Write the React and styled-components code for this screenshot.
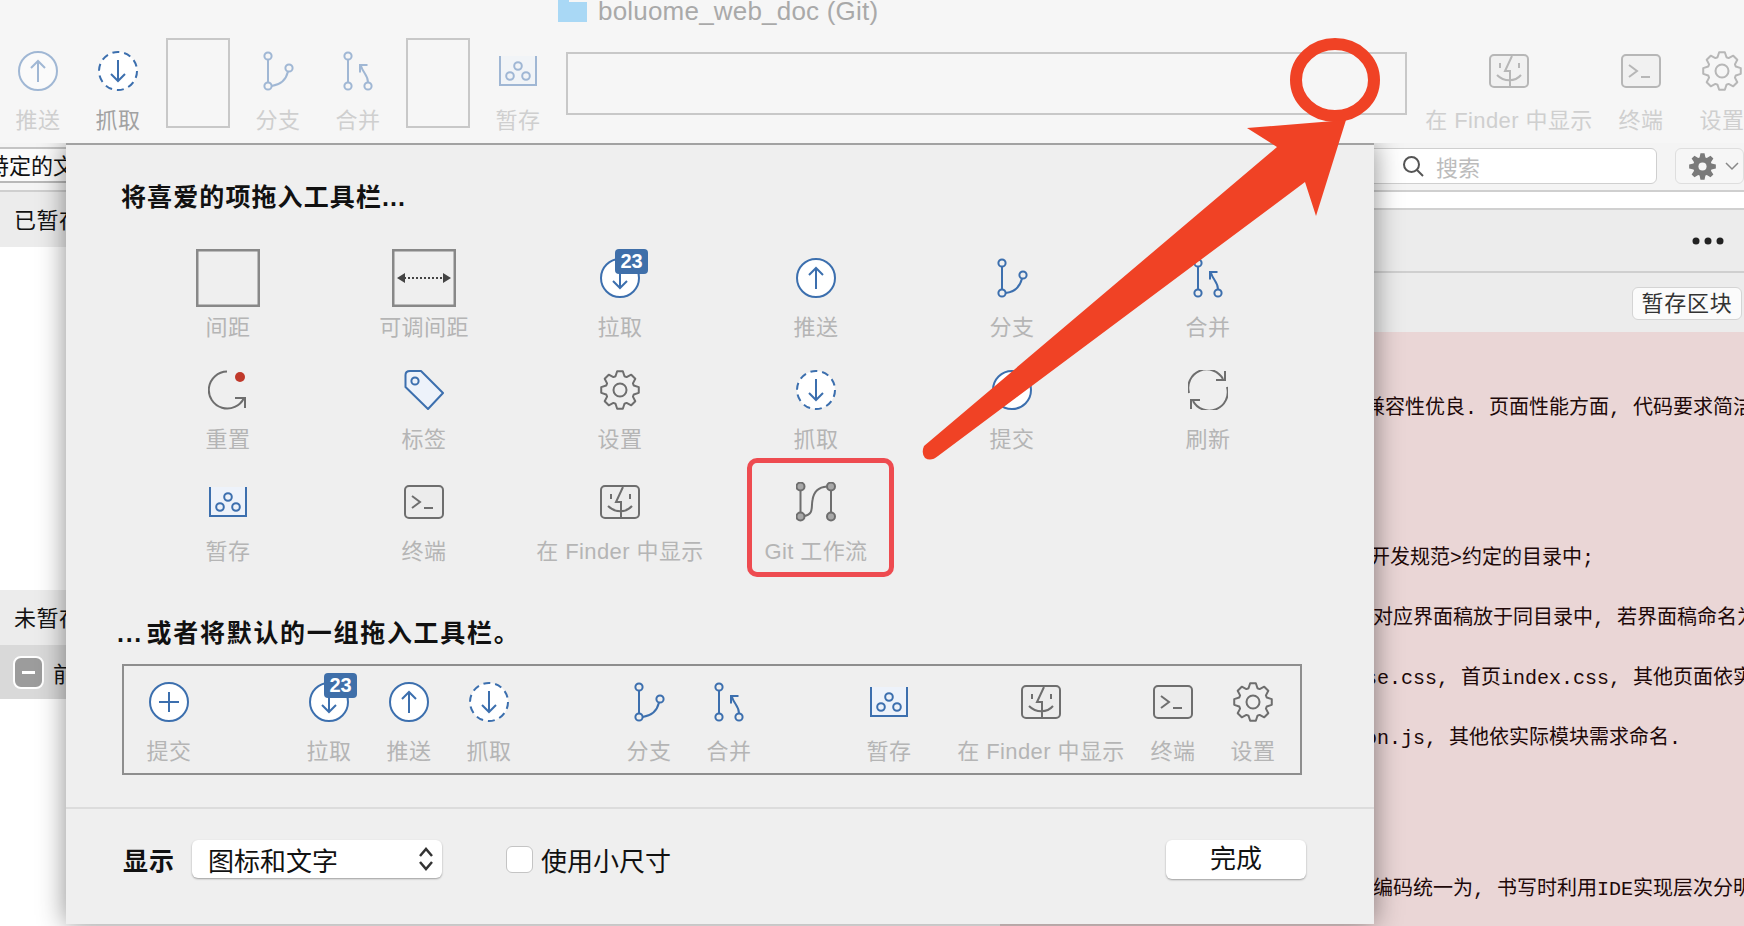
import React from "react";
import styled, { createGlobalStyle } from "styled-components";

const BLUE = "#3c6fae";
const GREY = "#6e6e6e";

const Global = createGlobalStyle`
  html, body {
    margin: 0;
    overflow: hidden;
    background: #fff;
  }
  * { box-sizing: border-box; }
`;

const Frame = styled.div`
  position: relative;
  width: 1744px;
  height: 926px;
  overflow: hidden;
  display: flex;
  flex-direction: column;
  font-family: "Liberation Sans", "Noto Sans CJK SC", sans-serif;
  color: #111;
`;

/* ---------- toolbar ---------- */
const Toolbar = styled.header`
  position: relative;
  z-index: 2;
  height: 143px;
  flex: none;
  background: #f6f6f6;
  overflow: hidden;
`;
const TitleRow = styled.div`
  height: 40px;
  display: flex;
  padding-left: 558px;
  gap: 11px;
  font-size: 26px;
  letter-spacing: 0.2px;
  line-height: 22px;
  color: #a9a9a9;
`;
const ToolRow = styled.div`
  display: flex;
  align-items: flex-start;
`;
const Slot = styled.div`
  position: relative;
  height: 62px;
  display: flex;
  align-items: center;
  justify-content: center;
  opacity: ${(p) => (p.$dim ? 0.46 : 1)};
`;
const Label = styled.div`
  margin-top: 5px;
  height: 28px;
  font-size: 22px;
  letter-spacing: 0.4px;
  line-height: 28px;
  text-align: center;
  white-space: nowrap;
  color: ${(p) => p.$color || "#b5b5b5"};
`;
const Tool = styled.div`
  flex: none;
  width: ${(p) => p.$w || 80}px;
  margin-left: ${(p) => p.$ml || 0}px;
`;
const Spacer = styled.div`
  flex: none;
  width: ${(p) => p.$w}px;
  height: ${(p) => p.$h || 90}px;
  margin-left: 8px;
  margin-right: 8px;
  margin-top: ${(p) => p.$mt || -2}px;
  border: 2px solid #c8c8c8;
`;

/* ---------- window behind the sheet ---------- */
const FilterBar = styled.div`
  height: 49px;
  flex: none;
  display: flex;
  align-items: center;
  justify-content: space-between;
  background: #f4f4f4;
  border-bottom: 2px solid #cfcfcf;
`;
const FilterInput = styled.div`
  width: 300px;
  height: 36px;
  margin-top: -3px;
  font-size: 22px;
  line-height: 36px;
  text-indent: -13px;
  background: #fbfbfb;
  border-top: 2px solid #c4c4c4;
  border-bottom: 2px solid #b8b8b8;
`;
const SearchGroup = styled.div`
  display: flex;
  align-items: center;
  gap: 18px;
  margin-top: -1px;
`;
const SearchBox = styled.div`
  width: 360px;
  height: 36px;
  display: flex;
  align-items: center;
  justify-content: flex-end;
  padding-right: 176px;
  gap: 11px;
  background: #fff;
  border: 1px solid #cfcfcf;
  border-radius: 6px;
  font-size: 22px;
  color: #bcbcbc;
`;
const GearButton = styled.div`
  width: 69px;
  height: 36px;
  display: flex;
  align-items: center;
  gap: 9px;
  padding-left: 13px;
  background: #f6f6f6;
  border: 1px solid #dedede;
  border-radius: 6px;
`;
const Panes = styled.div`
  flex: 1;
  display: flex;
  min-height: 0;
`;
const LeftPane = styled.div`
  width: 1000px;
  flex: none;
  display: flex;
  flex-direction: column;
  background: #fff;
`;
const GroupHead = styled.div`
  height: 55px;
  flex: none;
  padding-left: 14px;
  font-size: 22px;
  letter-spacing: 0.5px;
  line-height: 57px;
  background: #ececec;
`;
const Blank = styled.div`
  height: ${(p) => p.$h}px;
  flex: none;
  background: #fff;
`;
const FileRow = styled.div`
  height: 54px;
  flex: none;
  display: flex;
  align-items: center;
  gap: 9px;
  padding-left: 13px;
  font-size: 22px;
  background: #d9d9d9;
`;
const MinusBox = styled.span`
  width: 31px;
  height: 33px;
  display: flex;
  align-items: center;
  justify-content: center;
  background: #9c9c9c;
  border: 2px solid #fff;
  border-radius: 8px;
  &::before {
    content: "";
    width: 13px;
    height: 3px;
    background: #fff;
  }
`;
const RightPane = styled.div`
  flex: 1;
  display: flex;
  flex-direction: column;
  min-width: 0;
`;
const WhiteStrip = styled.div`
  height: 18px;
  flex: none;
  background: #fff;
  border-bottom: 2px solid #d0d0d0;
`;
const HunkHead = styled.div`
  height: 63px;
  flex: none;
  display: flex;
  align-items: center;
  justify-content: flex-end;
  padding-right: 20px;
  background: #ececec;
  border-bottom: 2px solid #cfcfcf;
`;
const HunkBar = styled.div`
  height: 59px;
  flex: none;
  display: flex;
  align-items: center;
  justify-content: flex-end;
  padding: 2px 2px 0 0;
  background: #ececec;
`;
const HunkButton = styled.div`
  width: 110px;
  height: 33px;
  background: #fbfbfb;
  border: 1px solid #d4d4d4;
  border-radius: 6px;
  text-align: center;
  font-size: 22px;
  letter-spacing: 0.8px;
  line-height: 31px;
  color: #333;
`;
const CodePane = styled.div`
  flex: 1;
  padding-top: 47px;
  background: #ead6d6;
  overflow: hidden;
`;
const CodeLine = styled.div`
  height: 60px;
  margin-top: ${(p) => p.$before || 0}px;
  padding-left: ${(p) => p.$indent}px;
  font-family: "Liberation Mono", "Noto Sans CJK SC", monospace;
  font-size: 20px;
  line-height: 60px;
  white-space: pre;
  color: #200808;
`;

/* ---------- customise sheet ---------- */
const Sheet = styled.section`
  position: absolute;
  z-index: 1;
  left: 66px;
  top: 143px;
  width: 1308px;
  height: 781px;
  background: #efefef;
  border-top: 2px solid #a2a2a2;
  box-shadow: 0 0 26px rgba(0, 0, 0, 0.45);
`;
const SheetTitle = styled.h2`
  margin: 37px 0 0 ${(p) => p.$left}px;
  height: 30px;
  font-size: 25px;
  line-height: 30px;
  letter-spacing: 1.1px;
  font-weight: 700;
  color: #111;
`;
const SecondTitle = styled(SheetTitle)`
  margin-top: 35px;
  letter-spacing: 1.7px;
  word-spacing: -5px;
`;
const Palette = styled.div`
  margin: 35px 0 0 64px;
  display: grid;
  grid-template-columns: repeat(6, 196px);
  grid-auto-rows: 112px;
`;
const Cell = styled.div`
  position: relative;
  &[data-marked]::after {
    content: "";
    position: absolute;
    left: 29px;
    right: 20px;
    top: -13px;
    bottom: 6px;
    border: 5px solid #ee4b50;
    border-radius: 10px;
  }
`;
const DefaultSet = styled.div`
  margin: 16px 0 0 56px;
  width: 1180px;
  height: 111px;
  display: flex;
  border: 2px solid #8e8e8e;
  padding: 5px 0 0 1px;
`;
const Divider = styled.div`
  margin-top: 32px;
  height: 2px;
  background: #dcdcdc;
`;
const Footer = styled.div`
  height: 100px;
  display: flex;
  align-items: center;
  padding: 0 68px 0 57px;
  font-size: 26px;
`;
const FooterLabel = styled.span`
  font-weight: 700;
  font-size: 25px;
  letter-spacing: 1px;
  margin-right: 17px;
`;
const Select = styled.div`
  width: 250px;
  height: 38px;
  display: flex;
  align-items: center;
  justify-content: space-between;
  padding: 0 8px 0 16px;
  background: #fff;
  border-radius: 6px;
  box-shadow: 0 1px 2px rgba(0, 0, 0, 0.35);
`;
const Check = styled.span`
  width: 27px;
  height: 27px;
  margin-left: 64px;
  background: #fff;
  border: 1px solid #c4c4c4;
  border-radius: 6px;
`;
const CheckText = styled.span`
  margin-left: 8px;
`;
const DoneButton = styled.div`
  margin-left: auto;
  width: 140px;
  height: 39px;
  text-align: center;
  line-height: 39px;
  background: #fff;
  border-radius: 6px;
  box-shadow: 0 1px 2px rgba(0, 0, 0, 0.35);
`;
const Badge = styled.span`
  position: absolute;
  left: calc(50% - 5px);
  top: 2px;
  width: 33px;
  height: 25px;
  background: #3f6fa9;
  border-radius: 4px;
  color: #fff;
  font-size: 20px;
  font-weight: 700;
  line-height: 25px;
  text-align: center;
`;
const Annotation = styled.svg`
  position: absolute;
  z-index: 3;
  left: 0;
  top: 0;
  pointer-events: none;
`;

/* ---------- icons ---------- */
const Svg = ({ w = 40, h = 40, children, c = BLUE, sw = 2 }) => (
  <svg width={w} height={h} viewBox={`0 0 ${w} ${h}`} fill="none" stroke={c} strokeWidth={sw}>
    {children}
  </svg>
);

const Push = () => (
  <Svg>
    <circle cx="20" cy="20" r="19" fill="#fff" />
    <path d="M20 31V10M13 17l7-7 7 7" />
  </Svg>
);
const PullCircle = () => (
  <Svg>
    <circle cx="20" cy="20" r="19" fill="#fff" />
    <path d="M20 9v21M13 23l7 7 7-7" />
  </Svg>
);
const Fetch = () => (
  <Svg>
    <circle cx="20" cy="20" r="19" fill="#fff" strokeDasharray="7 4.9" />
    <path d="M20 9v21M13 23l7 7 7-7" />
  </Svg>
);
const Commit = () => (
  <Svg>
    <circle cx="20" cy="20" r="19" fill="#fff" />
    <path d="M20 10v20M10 20h20" />
  </Svg>
);
const Branch = () => (
  <Svg w={32}>
    <circle cx="6" cy="5" r="3.6" />
    <circle cx="6" cy="35" r="3.6" />
    <circle cx="27" cy="17" r="3.6" />
    <path d="M6 8.6v22.8M9.6 35C18 34 24 29 26 20.6" />
  </Svg>
);
const Merge = () => (
  <Svg w={30}>
    <circle cx="5" cy="5" r="3.6" />
    <circle cx="5" cy="35" r="3.6" />
    <circle cx="25" cy="35" r="3.6" />
    <path d="M5 8.6v22.8M25 31.4C25 24 20 22 18 15M17 21.500v-7.500h7.500" />
  </Svg>
);
const Stash = () => (
  <Svg w={38} h={30}>
    <path d="M1 0v29h36V0" fill="#edf2fa" />
    <circle cx="19" cy="10" r="3.8" />
    <circle cx="11" cy="20" r="3.8" />
    <circle cx="27" cy="20" r="3.8" />
  </Svg>
);
const Finder = () => (
  <Svg h={34} c={GREY}>
    <rect x="1" y="1" width="38" height="32" rx="4" fill="#ececec" />
    <path d="M23 2 16 17h5v16M11 9v5M30 9v5M8 21c7 7 18 7 24 0" />
  </Svg>
);
const Terminal = () => (
  <Svg h={34} c={GREY}>
    <rect x="1" y="1" width="38" height="32" rx="4" fill="#ececec" />
    <path d="M8 11l8 6-8 6M20 23h9" />
  </Svg>
);

const gearPath = (cx, cy, ro, ri, teeth = 8) => {
  const step = (Math.PI * 2) / teeth;
  const pts = [];
  for (let i = 0; i < teeth; i++) {
    const a = i * step - Math.PI / 2;
    [
      [ri, -0.5],
      [ro, -0.24],
      [ro, 0.24],
      [ri, 0.5],
    ].forEach(([r, t]) => {
      const ang = a + t * step * 0.8;
      pts.push(`${(cx + r * Math.cos(ang)).toFixed(2)} ${(cy + r * Math.sin(ang)).toFixed(2)}`);
    });
  }
  return `M${pts.join("L")}Z`;
};

const Gear = () => (
  <Svg c={GREY}>
    <path d={gearPath(20, 20, 19, 14.5)} strokeLinejoin="round" />
    <circle cx="20" cy="20" r="6.5" />
  </Svg>
);
const Reset = () => (
  <Svg c={GREY}>
    <path d="M19 1.500A18.500 18.500 0 1 0 36 28M27 28H37V38" />
    <circle cx="32" cy="7" r="5" fill="#c0392b" stroke="none" />
  </Svg>
);
const Tag = () => (
  <Svg>
    <path d="M1.500 5Q1.500 1 6 1H17L39 23 24 39 1.500 17Z" fill="#edf2fa" strokeLinejoin="round" />
    <circle cx="11" cy="11" r="3.6" />
  </Svg>
);
const Refresh = () => (
  <Svg c={GREY}>
    <path d="M1 23A18.500 18.500 0 0 1 35 9M37 1v9H28M39 17A18.500 18.500 0 0 1 5 31M3 39v-9h9" />
  </Svg>
);
const GitFlow = () => (
  <Svg c={GREY}>
    <path d="M4.500 8v22M35 8v22M8 34C18 32 15 26 16.500 18C18 8 24 5 31 4.500" />
    <g fill="#a8a8a8">
      <circle cx="4.500" cy="4.500" r="4" />
      <circle cx="35" cy="4.500" r="4" />
      <circle cx="4.500" cy="34.500" r="4" />
      <circle cx="35" cy="34.500" r="4" />
    </g>
  </Svg>
);
const Gap = () => (
  <Svg w={64} h={58} c="#888" sw={2.5}>
    <rect x="1.250" y="1.250" width="61.500" height="55.500" />
  </Svg>
);
const FlexGap = () => (
  <Svg w={64} h={58} c="#888" sw={2.5}>
    <rect x="1.250" y="1.250" width="61.500" height="55.500" />
    <path d="M12 29h40" stroke="#444" strokeWidth="2" strokeDasharray="2 2" />
    <path d="M5 29l8-5v10zM59 29l-8-5v10z" fill="#444" stroke="none" />
  </Svg>
);
const Folder = () => (
  <svg width="29" height="22" viewBox="0 0 29 22">
    <path d="M0 0H11V2H29V22H0Z" fill="#a9d8f5" />
  </svg>
);

const Pull = () => (
  <>
    <PullCircle />
    <Badge>23</Badge>
  </>
);

const palette = [
  ["间距", Gap],
  ["可调间距", FlexGap],
  ["拉取", Pull],
  ["推送", Push],
  ["分支", Branch],
  ["合并", Merge],
  ["重置", Reset],
  ["标签", Tag],
  ["设置", Gear],
  ["抓取", Fetch],
  ["提交", Commit],
  ["刷新", Refresh],
  ["暂存", Stash],
  ["终端", Terminal],
  ["在 Finder 中显示", Finder],
  ["Git 工作流", GitFlow],
];

const defaults = [
  ["提交", Commit, 88, 0],
  ["拉取", Pull, 80, 76],
  ["推送", Push, 80, 0],
  ["抓取", Fetch, 80, 0],
  ["分支", Branch, 80, 80],
  ["合并", Merge, 80, 0],
  ["暂存", Stash, 80, 80],
  ["在 Finder 中显示", Finder, 170, 27],
  ["终端", Terminal, 80, 7],
  ["设置", Gear, 80, 0],
];

const Item = ({ label, Icon, dim, color, w, ml }) => (
  <Tool $w={w} $ml={ml}>
    <Slot $dim={dim}>
      <Icon />
    </Slot>
    <Label $color={color}>{label}</Label>
  </Tool>
);

export default function App() {
  return (
    <Frame>
      <Global />
      <Toolbar>
        <TitleRow>
          <Folder />
          <span>boluome_web_doc (Git)</span>
        </TitleRow>
        <ToolRow>
          <Item label="推送" Icon={Push} dim color="#cfcfcf" ml={-2} />
          <Item label="抓取" Icon={Fetch} color="#a2a2a2" />
          <Spacer $w={64} />
          <Item label="分支" Icon={Branch} dim color="#cfcfcf" />
          <Item label="合并" Icon={Merge} dim color="#cfcfcf" />
          <Spacer $w={64} />
          <Item label="暂存" Icon={Stash} dim color="#cfcfcf" />
          <Spacer $w={841} $h={63} $mt={12} />
          <Item label="在 Finder 中显示" Icon={Finder} dim color="#cfcfcf" w={170} ml={9} />
          <Item label="终端" Icon={Terminal} dim color="#cfcfcf" ml={7} />
          <Item label="设置" Icon={Gear} dim color="#cfcfcf" ml={1} />
        </ToolRow>
      </Toolbar>

      <FilterBar>
        <FilterInput>特定的文件</FilterInput>
        <SearchGroup>
          <SearchBox>
            <svg width="23" height="23" viewBox="0 0 23 23" fill="none" stroke="#555" strokeWidth="2">
              <circle cx="9.500" cy="9.500" r="7.500" />
              <path d="M15 15l6 6" />
            </svg>
            <span>搜索</span>
          </SearchBox>
          <GearButton>
            <svg width="27" height="27" viewBox="0 0 40 40">
              <path d={gearPath(20, 20, 20, 14)} fill="#7a7a7a" />
              <circle cx="20" cy="20" r="6" fill="#f6f6f6" />
            </svg>
            <svg width="14" height="9" viewBox="0 0 14 9" fill="none" stroke="#888" strokeWidth="1.500">
              <path d="M1 1l6 6 6-6" />
            </svg>
          </GearButton>
        </SearchGroup>
      </FilterBar>

      <Panes>
        <LeftPane>
          <GroupHead>已暂存的文件</GroupHead>
          <Blank $h={343} />
          <GroupHead>未暂存的文件</GroupHead>
          <FileRow>
            <MinusBox />
            <span>前端开发规范.md</span>
          </FileRow>
        </LeftPane>
        <RightPane>
          <WhiteStrip />
          <HunkHead>
            <svg width="32" height="10" viewBox="0 0 32 10" fill="#222">
              <circle cx="4" cy="5" r="3.500" />
              <circle cx="16" cy="5" r="3.500" />
              <circle cx="28" cy="5" r="3.500" />
            </svg>
          </HunkHead>
          <HunkBar>
            <HunkButton>暂存区块</HunkButton>
          </HunkBar>
          <CodePane>
            <CodeLine $indent={365}>兼容性优良. 页面性能方面, 代码要求简洁</CodeLine>
            <CodeLine $indent={370} $before={90}>开发规范&gt;约定的目录中;</CodeLine>
            <CodeLine $indent={373}>对应界面稿放于同目录中, 若界面稿命名为</CodeLine>
            <CodeLine $indent={365}>se.css, 首页index.css, 其他页面依实</CodeLine>
            <CodeLine $indent={365}>on.js, 其他依实际模块需求命名.</CodeLine>
            <CodeLine $indent={373} $before={91}>编码统一为, 书写时利用IDE实现层次分明</CodeLine>
          </CodePane>
        </RightPane>
      </Panes>

      <Sheet>
        <SheetTitle $left={55}>将喜爱的项拖入工具栏...</SheetTitle>
        <Palette>
          {palette.map(([label, Icon]) => (
            <Cell key={label} data-marked={label.startsWith("Git") ? "" : undefined}>
              <Slot>
                <Icon />
              </Slot>
              <Label>{label}</Label>
            </Cell>
          ))}
        </Palette>
        <SecondTitle $left={51}>... 或者将默认的一组拖入工具栏。</SecondTitle>
        <DefaultSet>
          {defaults.map(([label, Icon, w, ml]) => (
            <Item key={label} label={label} Icon={Icon} w={w} ml={ml} />
          ))}
        </DefaultSet>
        <Divider />
        <Footer>
          <FooterLabel>显示</FooterLabel>
          <Select>
            <span>图标和文字</span>
            <svg width="16" height="26" viewBox="0 0 16 26" fill="none" stroke="#333" strokeWidth="2.500">
              <path d="M2 10l6-7 6 7M2 16l6 7 6-7" />
            </svg>
          </Select>
          <Check />
          <CheckText>使用小尺寸</CheckText>
          <DoneButton>完成</DoneButton>
        </Footer>
      </Sheet>

      <Annotation width="1744" height="926" viewBox="0 0 1744 926">
        <ellipse cx="1335" cy="80" rx="39" ry="36" fill="none" stroke="#f04225" strokeWidth="12" />
        <path
          d="M1346 120L1247 128L1277 147L924 446Q921 453 925 458Q931 462 938 456L1305 182L1316 216Z"
          fill="#f04225"
        />
      </Annotation>
    </Frame>
  );
}
